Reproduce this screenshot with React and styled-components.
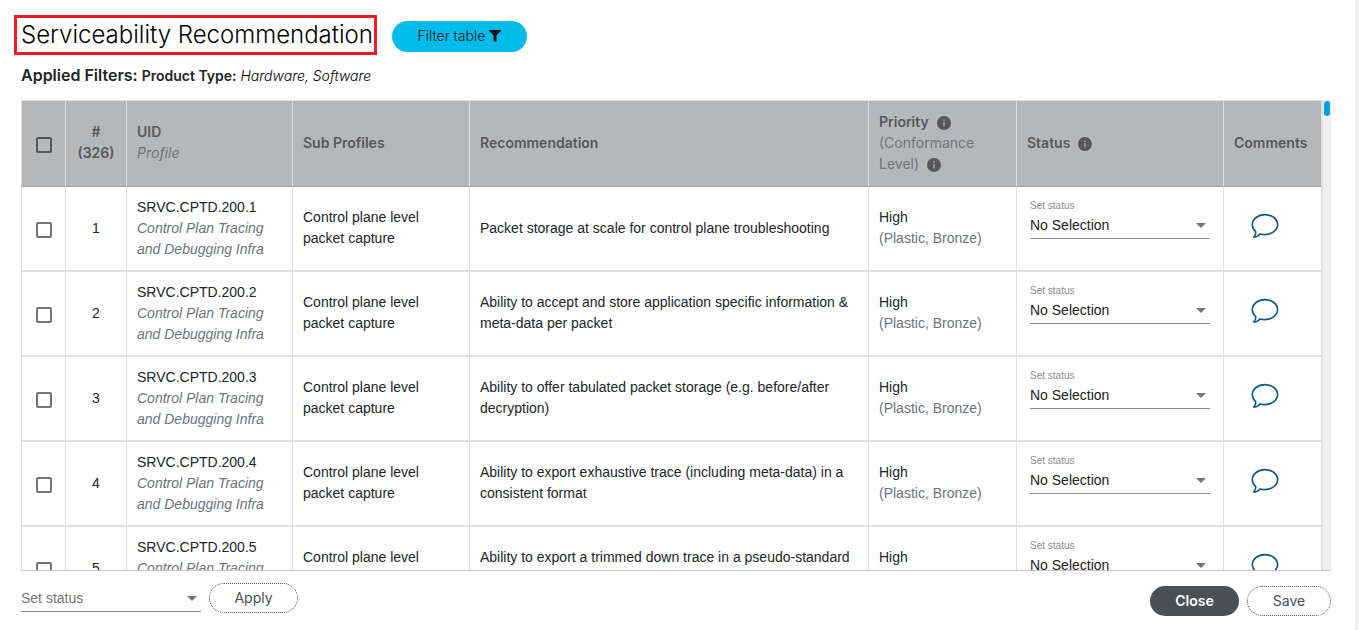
import React from "react";
import styled, { createGlobalStyle } from "styled-components";
import { FaFilter } from "react-icons/fa";

const GlobalStyle = createGlobalStyle`
  *, *::before, *::after { box-sizing: border-box; }
  body {
    margin: 0;
    background: #f0f0f0;
    color: #212529;
    font-family: "Liberation Sans", Arial, sans-serif;
    font-size: 14px;
    line-height: 21px;
  }
  button, select, input { font-family: inherit; font-size: inherit; }
`;

const uiFont = `Inter, "Liberation Sans", sans-serif`;

const Page = styled.main`
  display: flex;
  flex-direction: column;
  height: 100vh;
  margin-right: 4px;
  padding: 15px 24px 14px 21px;
  background: #fff;
  border-bottom-right-radius: 2px;
`;

const Heading = styled.header`
  display: flex;
  align-items: center;
  gap: 15px;
  margin-left: -7px;
`;

const Title = styled.h1`
  margin: 0;
  padding: 3px 1px 3px 4px;
  border: 3px solid #ed1c24;
  color: #000;
  font-family: ${uiFont};
  font-size: 24px;
  font-weight: 300;
  line-height: 28px;
`;

const FilterButton = styled.button`
  display: flex;
  align-items: center;
  justify-content: center;
  gap: 4px;
  width: 135px;
  height: 31px;
  margin-top: 2px;
  padding: 0 6px 2px;
  border: 0;
  border-radius: 16px;
  background: #00bceb;
  color: #111;
  font-family: ${uiFont};
  font-weight: 300;
  svg { margin-top: 2px; }
`;

const Applied = styled.p`
  display: flex;
  align-items: baseline;
  gap: 4px;
  margin: 10px 0 14px;
  font-family: ${uiFont};
  font-weight: 300;
`;

const AppliedLabel = styled.strong`
  font-size: 16px;
  font-weight: 600;
`;

const AppliedKey = styled.strong`
  font-weight: 600;
`;

const AppliedValue = styled.em`
  color: #000;
`;

const Scroller = styled.section`
  display: flex;
  flex: 1;
  min-height: 0;
  border-bottom: 1px solid #c8c4c6;
`;

const Viewport = styled.div`
  flex: 1;
  overflow: hidden;
`;

const Track = styled.div`
  width: 8px;
  padding: 1px 1px 0;
  background: #f0f0f0;
`;

const Thumb = styled.div`
  height: 15px;
  border-radius: 3px;
  background: #049fd9;
`;

const Table = styled.table`
  width: 100%;
  table-layout: fixed;
  border-collapse: separate;
  border-spacing: 0;
  border-right: 2px solid #e0e0e0;
`;

const HeadCell = styled.th`
  height: 87px;
  padding: 0 10px 3px;
  border-top: 1px solid #e0e0e0;
  border-left: 1px solid #e0e0e0;
  border-bottom: 1px solid #9e9e9e;
  background: #b4b8bb;
  color: #58585b;
  font-family: ${uiFont};
  font-weight: 600;
  text-align: ${(p) => p.$align || "left"};
`;

const Cell = styled.td`
  height: 85px;
  padding: 0 ${(p) => p.$pad || 10}px 1px;
  border-left: 1px solid #e0e0e0;
  border-bottom: 2px solid #e0e0e0;
  text-align: ${(p) => p.$align || "left"};
`;

const Muted = styled.span`
  display: block;
  color: #6c757d;
  font-weight: 400;
  font-style: ${(p) => (p.$italic ? "italic" : "normal")};
`;

const Check = styled.input`
  display: block;
  appearance: none;
  width: 16px;
  height: 16px;
  margin: ${(p) => (p.$dark ? 5 : 3)}px auto 0;
  border: 2px solid ${(p) => (p.$dark ? "#58585b" : "#757575")};
  border-radius: 2px;
`;

const InfoSvg = styled.svg`
  margin-left: 8px;
  vertical-align: -3px;
`;

const Field = styled.label`
  display: block;
  width: 180px;
  padding-bottom: ${(p) => (p.$floating ? 20 : 0)}px;
`;

const FieldLabel = styled.span`
  display: block;
  margin-bottom: -2px;
  color: #8c8c8c;
  font-size: 10px;
  line-height: 16px;
`;

const SelectBox = styled.span`
  position: relative;
  display: block;
  &::after {
    content: "";
    position: absolute;
    top: 11px;
    right: 4px;
    border: 5px solid transparent;
    border-top-color: #757575;
    border-bottom: 0;
    pointer-events: none;
  }
`;

const Select = styled.select`
  display: block;
  appearance: none;
  width: 100%;
  height: 27px;
  padding: 0;
  border: 0;
  border-bottom: 1px solid #8c8c8c;
  border-radius: 0;
  background: transparent;
  color: ${(p) => (p.$placeholder ? "#757575" : "#212121")};
`;

const CommentButton = styled.button`
  display: block;
  margin: 0 0 4px 17px;
  padding: 0;
  border: 0;
  background: none;
  svg { display: block; }
`;

const Footer = styled.footer`
  display: flex;
  align-items: flex-start;
  justify-content: space-between;
  padding-top: 12px;
`;

const Bulk = styled.div`
  display: flex;
  align-items: center;
  gap: 8px;
`;

const Actions = styled.div`
  display: flex;
  gap: 8px;
  padding-top: 3px;
`;

const Pill = styled.button`
  width: ${(p) => p.$width}px;
  height: 30px;
  padding: 0 0 2px;
  border: ${(p) => (p.$solid ? "0" : "1px dotted #495057")};
  border-radius: 15px;
  background: ${(p) => (p.$solid ? "#495057" : "#fff")};
  color: ${(p) => (p.$solid ? "#fff" : "#495057")};
  font-family: ${uiFont};
  font-weight: ${(p) => (p.$solid ? 600 : 400)};
`;

const Info = () => (
  <InfoSvg width="14" height="14" viewBox="0 0 14 14" aria-hidden="true">
    <circle cx="7" cy="7" r="7" fill="#58585b" />
    <path d="M7 3.5v1.4M7 6v4.6" stroke="#b4b8bb" strokeWidth="1.2" />
  </InfoSvg>
);

const Bubble = () => (
  <svg width="28" height="26" viewBox="0 0 28 26" fill="none" stroke="#0b5a82" strokeWidth="1.6" strokeLinejoin="round" aria-hidden="true">
    <path d="M14 1.6C20.9 1.6 26.6 6 26.6 11.6S20.9 21.6 14 21.6C12.2 21.6 10.5 21.3 9 20.9C7.4 22.8 5.6 24 2.6 24C4.3 22.4 4.9 20.5 4.7 18.7C2.6 16.9 1.3 14.4 1.3 11.6C1.3 6 7.1 1.6 14 1.6Z" />
  </svg>
);

const columns = [44, 61, 166, 177, null, 148, 207, 98];

const recommendations = [
  "Packet storage at scale for control plane troubleshooting",
  "Ability to accept and store application specific information & meta-data per packet",
  "Ability to offer tabulated packet storage (e.g. before/after decryption)",
  "Ability to export exhaustive trace (including meta-data) in a consistent format",
  "Ability to export a trimmed down trace in a pseudo-standard format",
];

const Row = ({ number, text }) => (
  <tr>
    <Cell><Check type="checkbox" aria-label={`Select row ${number}`} /></Cell>
    <Cell $align="center">{number}</Cell>
    <Cell>
      SRVC.CPTD.200.{number}
      <Muted $italic>Control Plan Tracing and Debugging Infra</Muted>
    </Cell>
    <Cell>Control plane level packet capture</Cell>
    <Cell>{text}</Cell>
    <Cell>
      High
      <Muted>(Plastic, Bronze)</Muted>
    </Cell>
    <Cell $pad={13}>
      <Field $floating>
        <FieldLabel>Set status</FieldLabel>
        <SelectBox>
          <Select defaultValue="none"><option value="none">No Selection</option></Select>
        </SelectBox>
      </Field>
    </Cell>
    <Cell>
      <CommentButton aria-label={`Comments for row ${number}`}><Bubble /></CommentButton>
    </Cell>
  </tr>
);

export default function App() {
  return (
    <>
      <GlobalStyle />
      <Page>
        <Heading>
          <Title>Serviceability Recommendation</Title>
          <FilterButton>Filter table <FaFilter size={12} /></FilterButton>
        </Heading>
        <Applied>
          <AppliedLabel>Applied Filters:</AppliedLabel>
          <AppliedKey>Product Type:</AppliedKey>
          <AppliedValue>Hardware, Software</AppliedValue>
        </Applied>
        <Scroller>
          <Viewport>
            <Table>
              <colgroup>
                {columns.map((width, i) => <col key={i} width={width || undefined} />)}
              </colgroup>
              <thead>
                <tr>
                  <HeadCell><Check $dark type="checkbox" aria-label="Select all rows" /></HeadCell>
                  <HeadCell $align="center">#<br />(326)</HeadCell>
                  <HeadCell>UID<Muted $italic>Profile</Muted></HeadCell>
                  <HeadCell>Sub Profiles</HeadCell>
                  <HeadCell>Recommendation</HeadCell>
                  <HeadCell>
                    Priority<Info />
                    <Muted>(Conformance Level)<Info /></Muted>
                  </HeadCell>
                  <HeadCell>Status<Info /></HeadCell>
                  <HeadCell>Comments</HeadCell>
                </tr>
              </thead>
              <tbody>
                {recommendations.map((text, i) => <Row key={text} number={i + 1} text={text} />)}
              </tbody>
            </Table>
          </Viewport>
          <Track><Thumb /></Track>
        </Scroller>
        <Footer>
          <Bulk>
            <Field>
              <SelectBox>
                <Select $placeholder defaultValue="" aria-label="Set status"><option value="">Set status</option></Select>
              </SelectBox>
            </Field>
            <Pill $width={89}>Apply</Pill>
          </Bulk>
          <Actions>
            <Pill $solid $width={89}>Close</Pill>
            <Pill $width={84}>Save</Pill>
          </Actions>
        </Footer>
      </Page>
    </>
  );
}
